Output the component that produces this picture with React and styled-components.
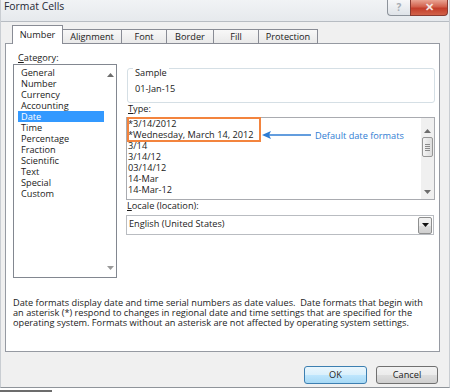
import React from 'react';
import styled, { createGlobalStyle } from 'styled-components';

const FS = '9.2px';

const Global = createGlobalStyle`
  html, body { margin: 0; padding: 0; background: #ffffff; }
  body { font-family: "Open Sans", "Noto Sans", sans-serif; color: #1b1b1b; }
  * { box-sizing: border-box; }
`;

const Page = styled.div`
  width: 450px;
  height: 392px;
  overflow: hidden;
  display: flex;
  flex-direction: column;
`;

const Window = styled.div`
  width: 450px;
  height: 388px;
  background: #f0f0f0;
  border-left: 1px solid #c9cdd2;
  border-right: 1px solid #c9cdd2;
  border-bottom: 1px solid #8f949a;
  display: flex;
  flex-direction: column;
`;

const TitleBar = styled.div`
  height: 22px;
  flex: none;
  border-bottom: 1px solid #b7bcc2;
  background: linear-gradient(#f1f3f5, #e6e9ed);
  display: flex;
  justify-content: space-between;
  align-items: flex-start;
  padding-left: 3px;
`;

const Title = styled.div`
  font-size: 10.4px;
  line-height: 13px;
  color: #1e2733;
`;

const Controls = styled.div`
  display: flex;
  margin-right: 1px;
`;

const HelpButton = styled.div`
  width: 23px;
  height: 16px;
  border: 1px solid #8d939b;
  border-top: none;
  border-right: none;
  border-radius: 0 0 0 4px;
  background: linear-gradient(#f6f7f9, #dfe3e8);
  color: #a6acb4;
  font-size: 10px;
  font-weight: 700;
  line-height: 14px;
  text-align: center;
`;

const CloseButton = styled.div`
  width: 38px;
  height: 16px;
  border: 1px solid #8a3b32;
  border-top: none;
  border-radius: 0 0 4px 0;
  background: linear-gradient(#e9a493, #d2604c 45%, #c33d2a 55%, #d1624a);
  color: #f4e4e0;
  font-size: 11px;
  font-weight: 700;
  line-height: 14px;
  text-align: center;
`;

const Body = styled.div`
  flex: 1;
  display: flex;
  flex-direction: column;
  padding: 0 9px 0 4px;
`;

const TabRow = styled.div`
  height: 22px;
  display: flex;
  align-items: flex-end;
  padding-left: 7px;
  margin-bottom: -1px;
  position: relative;
  z-index: 1;
`;

const Tab = styled.div`
  width: ${(p) => p.$w}px;
  height: ${(p) => (p.$active ? 19 : 15)}px;
  margin-right: -1px;
  border: 1px solid #898c95;
  border-bottom: ${(p) => (p.$active ? 'none' : '1px solid #898c95')};
  background: ${(p) => (p.$active ? '#ffffff' : 'linear-gradient(#f8f8f8, #e9e9e9)')};
  font-size: ${FS};
  line-height: ${(p) => (p.$active ? 17 : 14)}px;
  text-align: center;
  color: #1b1b1b;
  position: relative;
  z-index: ${(p) => (p.$active ? 2 : 1)};
`;

const Panel = styled.div`
  width: 435px;
  height: 309px;
  border: 1px solid #969aa2;
  background: #ffffff;
  padding: 8px 0 0 7px;
  display: flex;
  flex-direction: column;
`;

const Row = styled.div`
  display: flex;
  gap: 9px;
`;

const LeftCol = styled.div`
  width: 104px;
  display: flex;
  flex-direction: column;
`;

const RightCol = styled.div`
  flex: 1;
  padding-right: 4px;
  display: flex;
  flex-direction: column;
`;

const Label = styled.div`
  font-size: ${FS};
  line-height: ${(p) => p.$lh || 12}px;
  padding-left: ${(p) => p.$pl || 0}px;
  color: #1b1b1b;
  u { text-decoration: underline; }
`;

const ListBox = styled.div`
  height: ${(p) => p.$h}px;
  border: 1px solid ${(p) => p.$border || '#828790'};
  background: #ffffff;
  display: flex;
  position: relative;
  margin-top: ${(p) => p.$mt || 0}px;
`;

const Items = styled.div`
  flex: 1;
  padding: ${(p) => p.$pt || 0}px 0 0 ${(p) => p.$pl || 0}px;
  overflow: hidden;
`;

const Item = styled.div`
  height: 11px;
  font-size: ${FS};
  line-height: 11px;
  padding-left: ${(p) => p.$pl || 0}px;
  white-space: nowrap;
  background: ${(p) => (p.$selected ? '#3399ff' : 'transparent')};
  color: ${(p) => (p.$selected ? '#ffffff' : '#1b1b1b')};
`;

const ScrollCol = styled.div`
  width: ${(p) => p.$w}px;
  display: flex;
  flex-direction: column;
  align-items: center;
  padding: ${(p) => p.$pad};
  background: ${(p) => p.$bg || 'transparent'};
`;

const Arrow = styled.svg`
  display: block;
  flex: none;
`;

const Spacer = styled.div`
  flex: 1;
`;

const Thumb = styled.div`
  width: 11px;
  height: 20px;
  margin-top: ${(p) => p.$mt}px;
  border: 1px solid #969696;
  border-radius: 2px;
  background: linear-gradient(90deg, #f4f4f4, #dcdcdc);
  display: flex;
  flex-direction: column;
  align-items: center;
  justify-content: center;
  gap: 1px;
`;

const Grip = styled.div`
  width: 5px;
  height: 1px;
  background: #8a8a8a;
`;

const SampleBox = styled.fieldset`
  margin: 6px 0 0 1px;
  padding: 0 7px 7px;
  border: 1px solid #d5dfe5;
  border-radius: 3px;
  min-width: 0;
`;

const Legend = styled.legend`
  padding: 10px 2px 0;
  margin-left: -2px;
  font-size: ${FS};
  line-height: 10px;
  color: #1b1b1b;
`;

const SampleValue = styled.div`
  padding-top: 5px;
  font-size: ${FS};
  line-height: 12px;
`;

const Highlight = styled.div`
  position: absolute;
  left: 0;
  top: -1px;
  width: 134px;
  height: 25px;
  border: 2px solid #f3843e;
`;

const Annotation = styled.div`
  position: absolute;
  left: 135px;
  top: 11px;
  height: 12px;
  display: flex;
  align-items: center;
  gap: 4px;
  color: #2f7dd3;
  font-size: ${FS};
  white-space: nowrap;
`;

const Dropdown = styled.div`
  margin-top: 4px;
  margin-right: 1px;
  height: 20px;
  border: 1px solid #b9bcc1;
  background: #ffffff;
  display: flex;
  align-items: center;
  justify-content: space-between;
  padding: 1px 1px 1px 2px;
`;

const DropText = styled.div`
  font-size: ${FS};
  line-height: 14px;
  align-self: flex-start;
`;

const DropButton = styled.div`
  width: 14px;
  height: 17px;
  border: 1px solid #8e8f8f;
  border-radius: 2px;
  background: linear-gradient(#f2f2f2, #ebebeb 50%, #dddddd 51%, #cfcfcf);
  display: flex;
  align-items: center;
  justify-content: center;
`;

const Description = styled.div`
  margin-top: 20px;
  font-size: ${FS};
  color: #1b1b1b;
  white-space: nowrap;
`;

const Line = styled.div`
  height: 10px;
  line-height: 10px;
`;

const Footer = styled.div`
  display: flex;
  justify-content: flex-end;
  gap: 9px;
  padding: 14px 2px 0 0;
`;

const Button = styled.div`
  width: ${(p) => p.$w}px;
  height: 18px;
  border-radius: 3px;
  font-size: ${FS};
  line-height: 16px;
  text-align: center;
  color: #1b1b1b;
  border: 1px solid ${(p) => (p.$primary ? '#3c7fb1' : '#707070')};
  background: ${(p) =>
    p.$primary
      ? 'linear-gradient(#eaf6fd, #d9f0fc 50%, #bee6fd 51%, #a7d9f5)'
      : 'linear-gradient(#f2f2f2, #ebebeb 50%, #dddddd 51%, #cfcfcf)'};
`;

const Backdrop = styled.div`
  flex: 1;
  display: flex;
  align-items: flex-end;
`;

const ShadowBar = styled.div`
  width: 52px;
  height: 2px;
  background: #6c6c6c;
`;

const UpArrow = () => (
  <Arrow width="7" height="4" viewBox="0 0 7 4">
    <path d="M0 4 L3.5 0 L7 4 Z" fill="#6d6d6d" />
  </Arrow>
);

const DownArrow = ({ color = '#6d6d6d' }) => (
  <Arrow width="7" height="4" viewBox="0 0 7 4">
    <path d="M0 0 L7 0 L3.5 4 Z" fill={color} />
  </Arrow>
);

const categories = [
  'General', 'Number', 'Currency', 'Accounting', 'Date', 'Time',
  'Percentage', 'Fraction', 'Scientific', 'Text', 'Special', 'Custom',
];

const types = [
  '*3/14/2012', '*Wednesday, March 14, 2012', '3/14', '3/14/12',
  '03/14/12', '14-Mar', '14-Mar-12',
];

const tabs = [
  ['Number', 51], ['Alignment', 60], ['Font', 46], ['Border', 48], ['Fill', 46], ['Protection', 60],
];

export default function App() {
  return (
    <Page>
      <Global />
      <Window>
        <TitleBar>
          <Title>Format Cells</Title>
          <Controls>
            <HelpButton>?</HelpButton>
            <CloseButton>✕</CloseButton>
          </Controls>
        </TitleBar>
        <Body>
          <TabRow>
            {tabs.map(([t, w], i) => (
              <Tab key={t} $w={w} $active={i === 0}>{t}</Tab>
            ))}
          </TabRow>
          <Panel>
            <Row>
              <LeftCol>
                <Label $pl={5}><u>C</u>ategory:</Label>
                <ListBox $h={214}>
                  <Items $pt={2} $pl={4}>
                    {categories.map((c) => (
                      <Item key={c} $pl={3} $selected={c === 'Date'}>{c}</Item>
                    ))}
                  </Items>
                  <ScrollCol $w={12} $pad="8px 0 7px">
                    <UpArrow />
                    <Spacer />
                    <DownArrow color="#9a9a9a" />
                  </ScrollCol>
                </ListBox>
              </LeftCol>
              <RightCol>
                <SampleBox>
                  <Legend>Sample</Legend>
                  <SampleValue>01-Jan-15</SampleValue>
                </SampleBox>
                <Label $pl={2}><u>T</u>ype:</Label>
                <ListBox $h={83} $mt={2} $border="#a9abb0">
                  <Items $pl={1}>
                    {types.map((t) => (
                      <Item key={t}>{t}</Item>
                    ))}
                  </Items>
                  <ScrollCol $w={13} $pad="11px 0 5px" $bg="#f0f0f0">
                    <UpArrow />
                    <Thumb $mt={4}>
                      <Grip /><Grip /><Grip /><Grip />
                    </Thumb>
                    <Spacer />
                    <DownArrow />
                  </ScrollCol>
                  <Highlight />
                  <Annotation>
                    <svg width="49" height="8" viewBox="0 0 49 8">
                      <path d="M49 4 L7 4" stroke="#2f7dd3" strokeWidth="1.6" />
                      <path d="M0 4 L9 0 L7 4 L9 8 Z" fill="#2f7dd3" />
                    </svg>
                    Default date formats
                  </Annotation>
                </ListBox>
                <Label $lh={11} $pl={1}><u>L</u>ocale (location):</Label>
                <Dropdown>
                  <DropText>English (United States)</DropText>
                  <DropButton>
                    <DownArrow color="#111" />
                  </DropButton>
                </Dropdown>
              </RightCol>
            </Row>
            <Description>
              <Line>Date formats display date and time serial numbers as date values.&nbsp; Date formats that begin with</Line>
              <Line>an asterisk (*) respond to changes in regional date and time settings that are specified for the</Line>
              <Line>operating system. Formats without an asterisk are not affected by operating system settings.</Line>
            </Description>
          </Panel>
          <Footer>
            <Button $w={63} $primary>OK</Button>
            <Button $w={62}>Cancel</Button>
          </Footer>
        </Body>
      </Window>
      <Backdrop>
        <ShadowBar />
      </Backdrop>
    </Page>
  );
}
